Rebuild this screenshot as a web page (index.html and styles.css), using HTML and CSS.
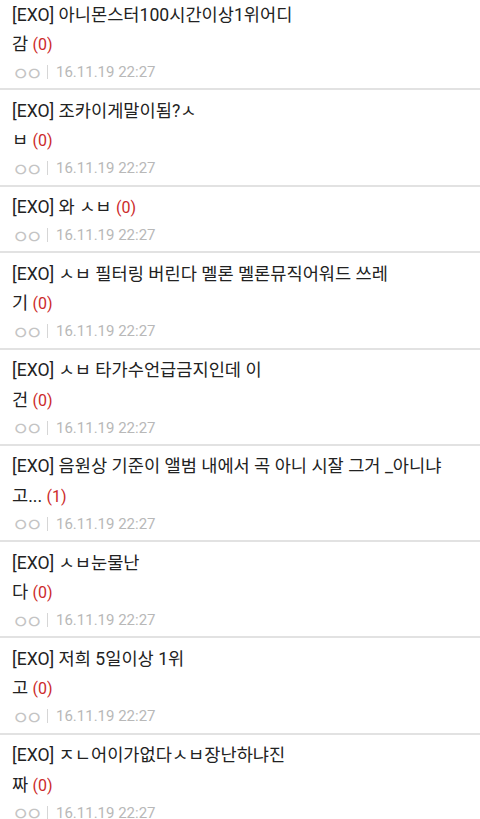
FILE: index.html
```html
<!DOCTYPE html>
<html lang="ko">
<head>
<meta charset="utf-8">
<title>list</title>
<link rel="stylesheet" href="styles.css">
</head>
<body>
<ul class="list">
  <li class="item">
    <p class="title">[EXO] 아니몬스터100시간이상1위어디<br>감 <span class="count">(0)</span></p>
    <p class="meta"><span class="author">ㅇㅇ</span><span class="sep"></span><span class="date">16.11.19 22:27</span></p>
  </li>
  <li class="item">
    <p class="title">[EXO] 조카이게말이됨?ㅅ<br>ㅂ <span class="count">(0)</span></p>
    <p class="meta"><span class="author">ㅇㅇ</span><span class="sep"></span><span class="date">16.11.19 22:27</span></p>
  </li>
  <li class="item">
    <p class="title">[EXO] 와 ㅅㅂ <span class="count">(0)</span></p>
    <p class="meta"><span class="author">ㅇㅇ</span><span class="sep"></span><span class="date">16.11.19 22:27</span></p>
  </li>
  <li class="item">
    <p class="title">[EXO] ㅅㅂ 필터링 버린다 멜론 멜론뮤직어워드 쓰레<br>기 <span class="count">(0)</span></p>
    <p class="meta"><span class="author">ㅇㅇ</span><span class="sep"></span><span class="date">16.11.19 22:27</span></p>
  </li>
  <li class="item">
    <p class="title">[EXO] ㅅㅂ 타가수언급금지인데 이<br>건 <span class="count">(0)</span></p>
    <p class="meta"><span class="author">ㅇㅇ</span><span class="sep"></span><span class="date">16.11.19 22:27</span></p>
  </li>
  <li class="item">
    <p class="title">[EXO] 음원상 기준이 앨범 내에서 곡 아니 시잘 그거 _아니냐<br>고... <span class="count">(1)</span></p>
    <p class="meta"><span class="author">ㅇㅇ</span><span class="sep"></span><span class="date">16.11.19 22:27</span></p>
  </li>
  <li class="item">
    <p class="title">[EXO] ㅅㅂ눈물난<br>다 <span class="count">(0)</span></p>
    <p class="meta"><span class="author">ㅇㅇ</span><span class="sep"></span><span class="date">16.11.19 22:27</span></p>
  </li>
  <li class="item">
    <p class="title">[EXO] 저희 5일이상 1위<br>고 <span class="count">(0)</span></p>
    <p class="meta"><span class="author">ㅇㅇ</span><span class="sep"></span><span class="date">16.11.19 22:27</span></p>
  </li>
  <li class="item">
    <p class="title">[EXO] ㅈㄴ어이가없다ㅅㅂ장난하냐진<br>짜 <span class="count">(0)</span></p>
    <p class="meta"><span class="author">ㅇㅇ</span><span class="sep"></span><span class="date">16.11.19 22:27</span></p>
  </li>
</ul>
</body>
</html>
```

FILE: styles.css
```css
html, body {
  margin: 0;
  padding: 0;
  background: #ffffff;
}

body {
  font-family: Roboto, "Noto Sans CJK KR", sans-serif;
  overflow: hidden;
}

.list {
  list-style: none;
  margin: 0;
  padding: 0;
}

.item {
  padding: 6.5px 12px 3.75px 12px;
  border-bottom: 2px solid #e2e2e2;
}

.item:first-child {
  padding-top: 0.5px;
}

.title {
  margin: 0;
  font-size: 17.6px;
  line-height: 29.5px;
  color: #222222;
  white-space: nowrap;
}

.count {
  font-size: 16px;
  color: #cc2a2a;
}

.meta {
  margin: 0;
  display: flex;
  align-items: center;
  height: 25px;
  font-size: 15px;
  color: #b8b8b8;
}

.author {
  font-family: "Noto Sans CJK KR", sans-serif;
  font-size: 19px;
  line-height: 1;
  color: #c4c4c4;
  letter-spacing: -4px;
}

.sep {
  width: 1px;
  height: 14px;
  background: #d6d6d6;
  margin: 0 8px 0 8px;
}

.date {
  font-family: Roboto, sans-serif;
}
```
